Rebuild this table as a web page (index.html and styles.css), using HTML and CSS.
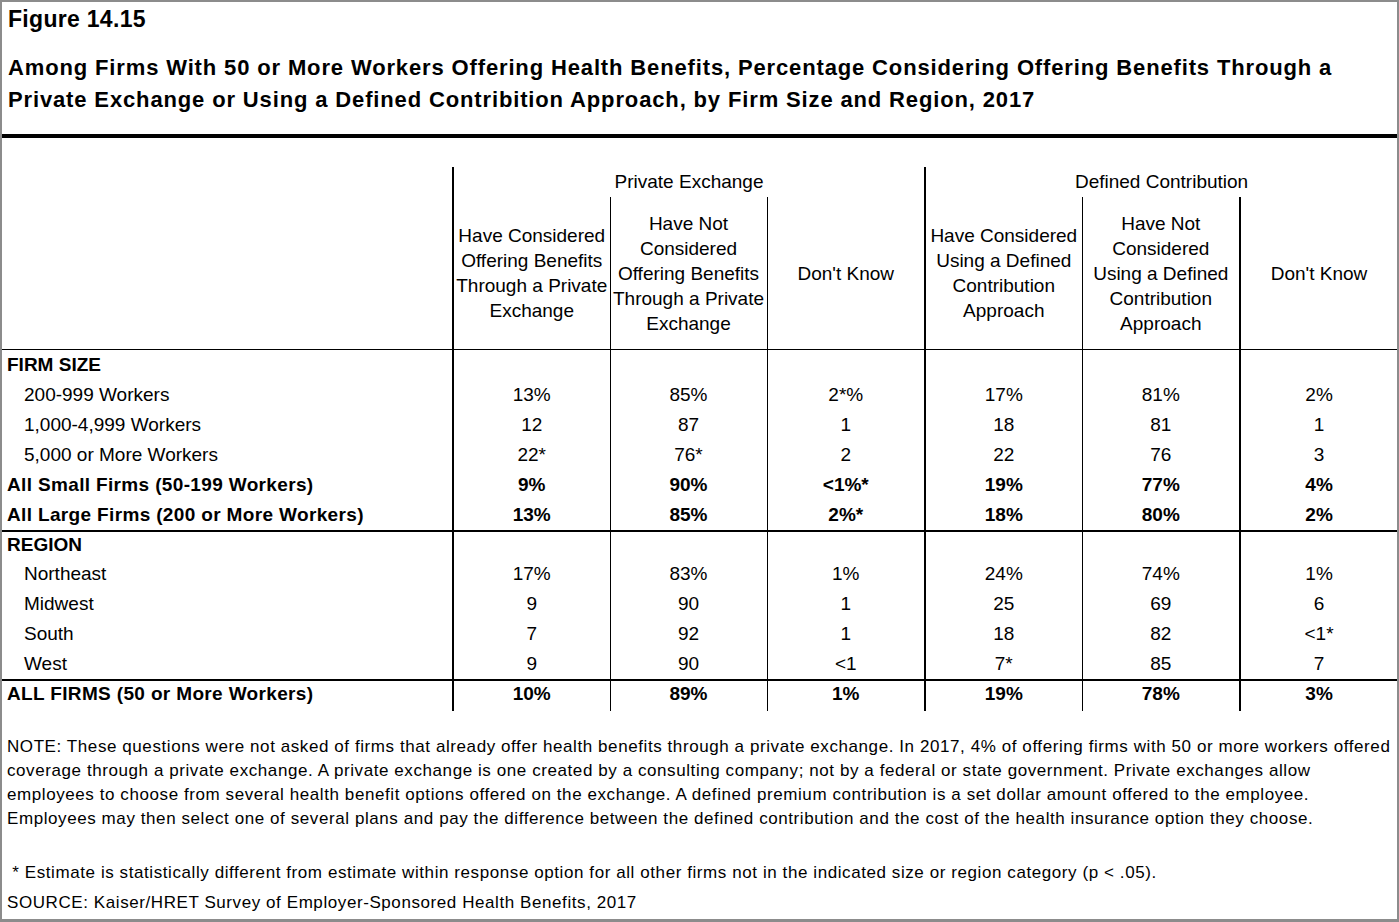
FILE: index.html
```html
<!DOCTYPE html>
<html lang="en">
<head>
<meta charset="utf-8">
<title>Figure 14.15</title>
<link rel="stylesheet" href="styles.css">
</head>
<body>
<div class="figure">
  <header class="fig-head">
    <div class="fig-label">Figure 14.15</div>
    <h1 class="fig-title">Among Firms With 50 or More Workers Offering Health Benefits, Percentage Considering Offering Benefits Through a<br>Private Exchange or Using a Defined Contribition Approach, by Firm Size and Region, 2017</h1>
  </header>
  <div class="rule"></div>
  <table class="data">
    <colgroup>
      <col class="c-label">
      <col class="c-val"><col class="c-val"><col class="c-val2">
      <col class="c-val"><col class="c-val2"><col class="c-val">
    </colgroup>
    <thead>
      <tr class="grp">
        <th class="lbl" rowspan="2"></th>
        <th colspan="3" class="gstart">Private Exchange</th>
        <th colspan="3" class="gstart">Defined Contribution</th>
      </tr>
      <tr class="sub">
        <th class="thick">Have Considered<br>Offering Benefits<br>Through a Private<br>Exchange</th>
        <th>Have Not<br>Considered<br>Offering Benefits<br>Through a Private<br>Exchange</th>
        <th>Don't Know</th>
        <th class="thick">Have Considered<br>Using a Defined<br>Contribution<br>Approach</th>
        <th>Have Not<br>Considered<br>Using a Defined<br>Contribution<br>Approach</th>
        <th class="thick">Don't Know</th>
      </tr>
    </thead>
    <tbody>
      <tr class="section"><td class="lbl b">FIRM SIZE</td><td class="thick"></td><td></td><td></td><td class="thick"></td><td></td><td class="thick"></td></tr>
      <tr><td class="lbl ind">200-999 Workers</td><td class="thick">13%</td><td>85%</td><td>2*%</td><td class="thick">17%</td><td>81%</td><td class="thick">2%</td></tr>
      <tr><td class="lbl ind">1,000-4,999 Workers</td><td class="thick">12</td><td>87</td><td>1</td><td class="thick">18</td><td>81</td><td class="thick">1</td></tr>
      <tr><td class="lbl ind">5,000 or More Workers</td><td class="thick">22*</td><td>76*</td><td>2</td><td class="thick">22</td><td>76</td><td class="thick">3</td></tr>
      <tr class="b"><td class="lbl">All Small Firms (50-199 Workers)</td><td class="thick">9%</td><td>90%</td><td>&lt;1%*</td><td class="thick">19%</td><td>77%</td><td class="thick">4%</td></tr>
      <tr class="b"><td class="lbl">All Large Firms (200 or More Workers)</td><td class="thick">13%</td><td>85%</td><td>2%*</td><td class="thick">18%</td><td>80%</td><td class="thick">2%</td></tr>
      <tr class="section sep"><td class="lbl b">REGION</td><td class="thick"></td><td></td><td></td><td class="thick"></td><td></td><td class="thick"></td></tr>
      <tr><td class="lbl ind">Northeast</td><td class="thick">17%</td><td>83%</td><td>1%</td><td class="thick">24%</td><td>74%</td><td class="thick">1%</td></tr>
      <tr><td class="lbl ind">Midwest</td><td class="thick">9</td><td>90</td><td>1</td><td class="thick">25</td><td>69</td><td class="thick">6</td></tr>
      <tr><td class="lbl ind">South</td><td class="thick">7</td><td>92</td><td>1</td><td class="thick">18</td><td>82</td><td class="thick">&lt;1*</td></tr>
      <tr><td class="lbl ind">West</td><td class="thick">9</td><td>90</td><td>&lt;1</td><td class="thick">7*</td><td>85</td><td class="thick">7</td></tr>
      <tr class="b sep total"><td class="lbl">ALL FIRMS (50 or More Workers)</td><td class="thick">10%</td><td>89%</td><td>1%</td><td class="thick">19%</td><td>78%</td><td class="thick">3%</td></tr>
    </tbody>
  </table>
  <p class="note">NOTE: These questions were not asked of firms that already offer health benefits through a private exchange. In 2017, 4% of offering firms with 50 or more workers offered<br>coverage through a private exchange. A private exchange is one created by a consulting company; not by a federal or state government. Private exchanges allow<br>employees to choose from several health benefit options offered on the exchange. A defined premium contribution is a set dollar amount offered to the employee.<br>Employees may then select one of several plans and pay the difference between the defined contribution and the cost of the health insurance option they choose.</p>
  <p class="foot">&nbsp;* Estimate is statistically different from estimate within response option for all other firms not in the indicated size or region category (p &lt; .05).<br>SOURCE: Kaiser/HRET Survey of Employer-Sponsored Health Benefits, 2017</p>
</div>
</body>
</html>
```

FILE: styles.css
```css
html, body {
  margin: 0;
  padding: 0;
  background: #ffffff;
}

body {
  font-family: "Liberation Sans", Arial, sans-serif;
  color: #000000;
}

.figure {
  box-sizing: border-box;
  width: 1399px;
  height: 922px;
  border: 2px solid #8c8c8c;
  border-bottom-width: 3px;
  overflow: hidden;
}

.fig-head {
  padding: 4px 0 0 6px;
}

.fig-label {
  font-size: 23px;
  font-weight: bold;
  line-height: 26px;
  letter-spacing: 0.3px;
}

.fig-title {
  margin: 20px 0 0 0;
  font-size: 22px;
  font-weight: bold;
  line-height: 32px;
  letter-spacing: 0.86px;
  white-space: nowrap;
}

.rule {
  margin-top: 18px;
  height: 4px;
  background: #000000;
}

.data {
  margin-top: 29px;
  width: 1395px;
  border-collapse: collapse;
  table-layout: fixed;
  font-size: 19px;
}

.c-label { width: 451px; }
.c-val { width: 157px; }
.c-val2 { width: 158px; }

.data th {
  font-weight: normal;
  padding: 0;
  text-align: center;
}

.data .grp th {
  height: 30px;
  line-height: 30px;
  vertical-align: middle;
}

.data .grp th.gstart {
  border-left: 2px solid #000000;
}

.data .sub th {
  height: 152px;
  line-height: 25px;
  vertical-align: middle;
  border-left: 1px solid #000000;
  border-bottom: 1px solid #000000;
}

.data .sub th.thick {
  border-left-width: 2px;
}

.data th.lbl {
  border-bottom: 1px solid #000000;
}

.data td {
  height: 30px;
  padding: 0;
  line-height: 30px;
  text-align: center;
  white-space: nowrap;
  border-left: 1px solid #000000;
}

.data td.thick {
  border-left-width: 2px;
}

.data td.lbl {
  text-align: left;
  padding-left: 5px;
  border-left: none;
}

.data td.ind {
  padding-left: 22px;
}

.data .b,
.data tr.b td {
  font-weight: bold;
}

.data tr.b td.lbl {
  letter-spacing: 0.35px;
}

.data tr.sep td {
  border-top: 2px solid #000000;
  height: 25px;
  line-height: 25px;
  padding-bottom: 2px;
}

.data tr.total td {
  height: 26px;
  line-height: 26px;
  padding-bottom: 4px;
}

.note {
  margin: 24px 0 0 0;
  padding-left: 5px;
  font-size: 17px;
  line-height: 24px;
  letter-spacing: 0.58px;
  white-space: nowrap;
}

.foot {
  margin: 27px 0 0 0;
  padding-left: 5px;
  font-size: 17px;
  line-height: 30px;
  letter-spacing: 0.58px;
  white-space: nowrap;
}
```
